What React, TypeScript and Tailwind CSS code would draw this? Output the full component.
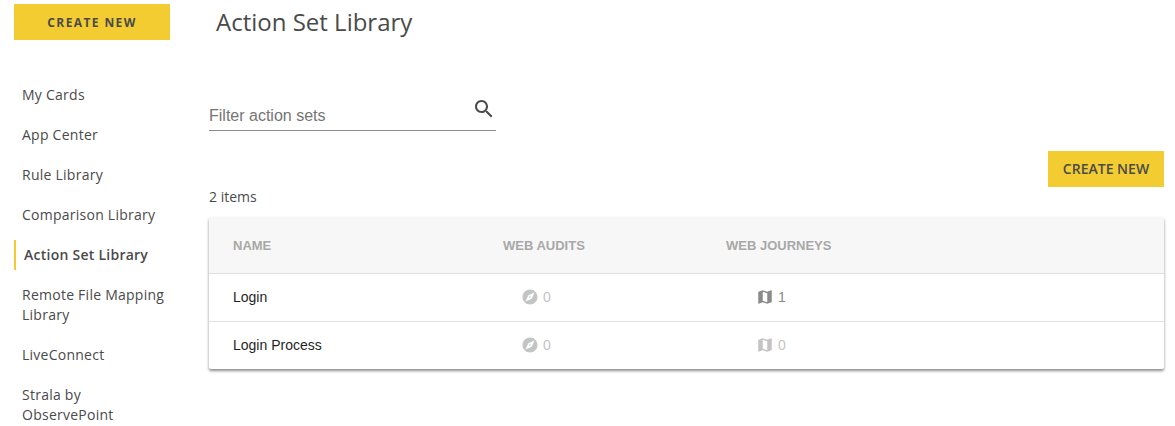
import React from 'react';

const NAV = [
  'My Cards',
  'App Center',
  'Rule Library',
  'Comparison Library',
  'Action Set Library',
  'Remote File Mapping Library',
  'LiveConnect',
  'Strala by ObservePoint',
];

const ROWS = [
  { name: 'Login', audits: 0, journeys: 1 },
  { name: 'Login Process', audits: 0, journeys: 0 },
];

const ExploreIcon: React.FC<{ className?: string }> = ({ className }) => (
  <svg viewBox="0 0 24 24" fill="currentColor" className={className}>
    <path d="M12 10.9c-.61 0-1.1.49-1.1 1.1s.49 1.1 1.1 1.1c.61 0 1.1-.49 1.1-1.1s-.49-1.1-1.1-1.1zM12 2C6.48 2 2 6.48 2 12s4.48 10 10 10 10-4.48 10-10S17.52 2 12 2zm2.19 12.19L6 18l3.81-8.19L18 6l-3.81 8.19z" />
  </svg>
);

const MapIcon: React.FC<{ className?: string }> = ({ className }) => (
  <svg viewBox="0 0 24 24" fill="currentColor" className={className}>
    <path d="M20.5 3l-.16.03L15 5.1 9 3 3.36 4.9c-.21.07-.36.25-.36.48V20.5c0 .28.22.5.5.5l.16-.03L9 18.9l6 2.1 5.64-1.9c.21-.07.36-.25.36-.48V3.5c0-.28-.22-.5-.5-.5zM15 19l-6-2.11V5l6 2.11V19z" />
  </svg>
);

const SearchIcon: React.FC<{ className?: string }> = ({ className }) => (
  <svg viewBox="0 0 24 24" fill="currentColor" className={className}>
    <path d="M15.5 14h-.79l-.28-.27C15.41 12.59 16 11.11 16 9.5 16 5.91 13.09 3 9.5 3S3 5.91 3 9.5 5.91 16 9.5 16c1.61 0 3.09-.59 4.23-1.57l.27.28v.79l5 4.99L20.49 19l-4.99-5zm-6 0C7.01 14 5 11.99 5 9.5S7.01 5 9.5 5 14 7.01 14 9.5 11.99 14 9.5 14z" />
  </svg>
);

const App: React.FC = () => {
  return (
    <div className="flex h-[426px] w-[1175px] overflow-hidden bg-white font-['Open_Sans',sans-serif] text-[#4a4a4a]">
      {/* Sidebar */}
      <div className="w-[209px] shrink-0 pl-[14px] pt-1">
        <button className="flex h-9 w-[156px] items-center justify-center bg-[#f3cc32] pt-px text-xs font-bold tracking-[1.4px] text-[#4a4a4a]">
          CREATE NEW
        </button>
        <div className="mt-[35px] w-[156px]">
          {NAV.map((item) => {
            const active = item === 'Action Set Library';
            return (
              <div key={item} className={active ? 'py-[5px]' : 'py-[10px] pl-2'}>
                <div
                  className={`text-sm leading-5 tracking-[0.25px] ${
                    active ? 'border-l-2 border-[#f3cc32] py-[5px] pl-2 font-semibold' : ''
                  }`}
                >
                  {item}
                </div>
              </div>
            );
          })}
        </div>
      </div>

      {/* Content */}
      <div className="w-[955px]">
        <h1 className="ml-[7px] mt-[7px] text-2xl leading-[30px] text-[#4a4a4a]">Action Set Library</h1>

        {/* Filter */}
        <div className="mt-[56px] flex h-[38px] w-[287px] items-start justify-between border-b border-[#8c8c8c]">
          <span className="mt-[13px] font-['Liberation_Sans',sans-serif] text-base leading-5 text-[#757575]">
            Filter action sets
          </span>
          <SearchIcon className="mt-1 size-6 text-[#4a4a4a]" />
        </div>

        <div className="flex justify-end">
          <button className="mt-[20px] flex h-9 w-[116px] items-center justify-center bg-[#f3cc32] text-sm font-semibold text-[#4a4a4a]">
            CREATE NEW
          </button>
        </div>

        <div className="text-sm leading-5">2 items</div>

        {/* Table */}
        <div className="mt-[10px] overflow-hidden rounded-[2px] font-['Liberation_Sans',sans-serif] shadow-[0_2px_3px_rgba(0,0,0,0.45)]">
          <div className="flex h-[57px] items-center border-b border-[#e0e0e0] bg-[#f7f7f7] pl-6 pt-px text-[13px] font-bold text-[#a8a8a8]">
            <div className="w-[270px]">NAME</div>
            <div className="w-[223px]">WEB AUDITS</div>
            <div>WEB JOURNEYS</div>
          </div>
          {ROWS.map((row, i) => (
            <div
              key={row.name}
              className={`flex items-center pb-px pl-6 text-sm text-[#1f1f1f] ${
                i === 0 ? 'h-12 border-b border-[#e0e0e0]' : 'h-[47px]'
              }`}
            >
              <div className="w-[288px]">{row.name}</div>
              <div className="flex w-[235px] items-center gap-1 text-[#c4c4c4]">
                <ExploreIcon className="size-[18px]" />
                <span>{row.audits}</span>
              </div>
              <div className={`flex items-center gap-1 ${row.journeys > 0 ? 'text-[#8a8a8a]' : 'text-[#c4c4c4]'}`}>
                <MapIcon className="size-[18px]" />
                <span>{row.journeys}</span>
              </div>
            </div>
          ))}
        </div>
      </div>
    </div>
  );
};

export default App;
